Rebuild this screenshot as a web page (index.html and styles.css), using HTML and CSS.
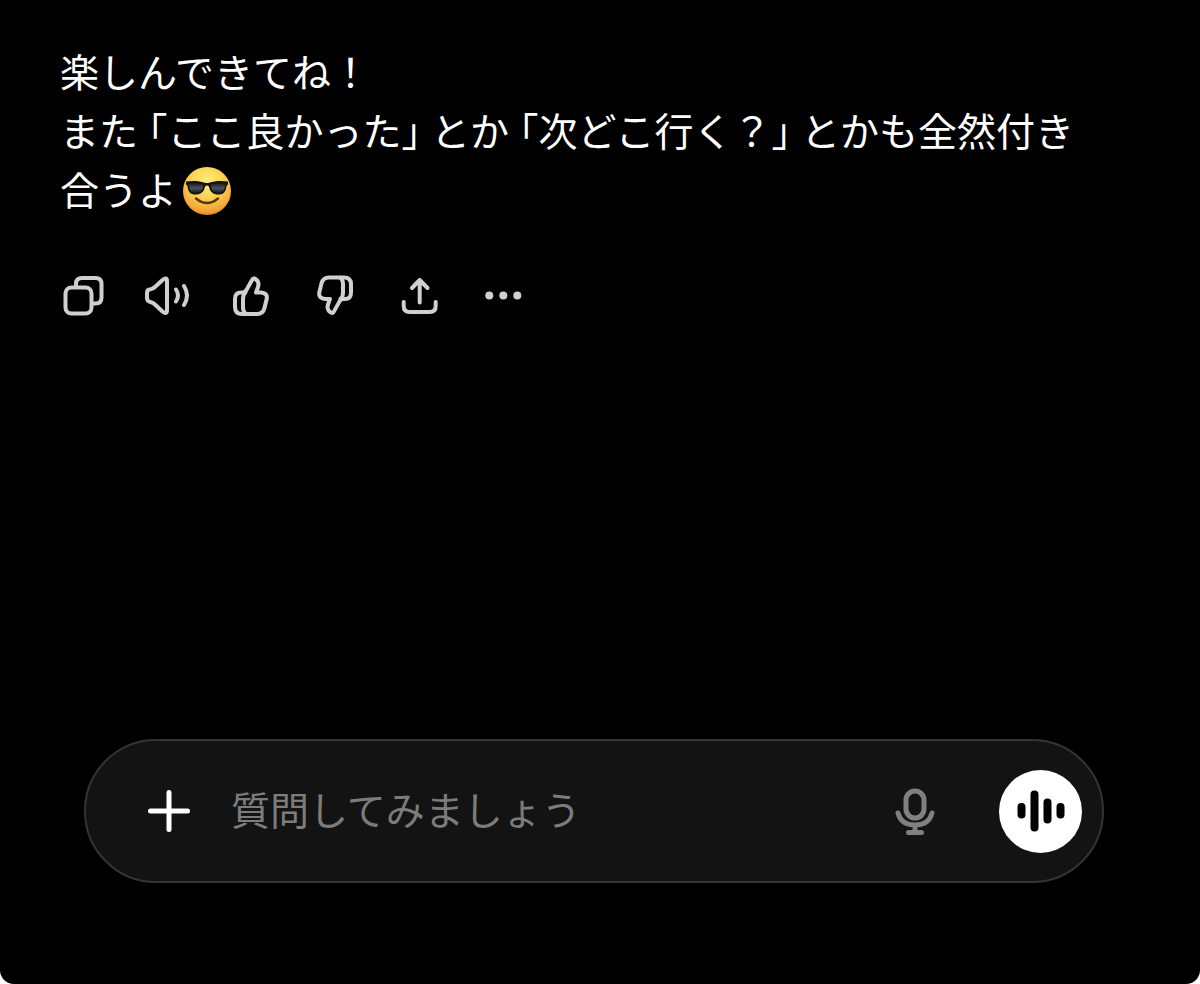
FILE: index.html
```html
<!DOCTYPE html>
<html lang="ja">
<head>
    <meta charset="UTF-8">
    <meta name="viewport" content="width=device-width, initial-scale=1.0">
    <title>チャット</title>
    <link rel="stylesheet" href="styles.css">
</head>
<body>
    <div class="container">
        <main class="message">
            <p class="message__text">楽しんできてね！<br>また<span class="quote">「ここ良かった」</span>とか<span class="quote">「次どこ行く？」</span>とかも全然付き合うよ<svg class="emoji" viewBox="0 0 50 50" role="img" aria-label="😎">
                <defs>
                    <radialGradient id="face" cx="0.5" cy="0.3" r="0.72">
                        <stop offset="0" stop-color="#ffee7c"/>
                        <stop offset="0.5" stop-color="#fbd052"/>
                        <stop offset="0.85" stop-color="#f2a638"/>
                        <stop offset="1" stop-color="#df8524"/>
                    </radialGradient>
                    <linearGradient id="lens" x1="0" y1="0" x2="0" y2="1">
                        <stop offset="0" stop-color="#18191c"/>
                        <stop offset="0.5" stop-color="#4a5366"/>
                        <stop offset="1" stop-color="#181a20"/>
                    </linearGradient>
                </defs>
                <circle cx="25" cy="25" r="24" fill="url(#face)"/>
                <path d="M4 15.500C10 14.500 18 14.800 22 16.500Q25 17.500 28 16.500C32 14.800 40 14.500 46 15.500V18.500L44.500 20C44 26 41.500 28.500 36.500 28.500C31 28.500 28 26 27 20.500Q25 18.500 23 20.500C22 26 19 28.500 13.500 28.500C8.500 28.500 6 26 5.500 20L4 18.500Z" fill="#15120f"/>
                <path d="M7 18C12 16.800 18 17 21 18.500C21 24 18.500 27 13.500 27C9 27 7 24 7 18ZM43 18C38 16.800 32 17 29 18.500C29 24 31.500 27 36.500 27C41 27 43 24 43 18Z" fill="url(#lens)"/>
                <path d="M14 32.500Q25 41.500 36 32.500" fill="none" stroke="#5c330c" stroke-width="2.400" stroke-linecap="round"/>
            </svg></p>
            <div class="actions">
                <button class="actions__item" type="button" aria-label="コピー">
                    <svg class="icon" viewBox="0 0 48 48">
                        <rect x="5.500" y="15.500" width="26" height="26" rx="6"/>
                        <path d="M16 15V12Q16 6 22 6H35.500Q41.500 6 41.500 12V25.500Q41.500 31.500 35.500 31.500H32"/>
                    </svg>
                </button>
                <button class="actions__item" type="button" aria-label="読み上げる">
                    <svg class="icon" viewBox="0 0 48 48">
                        <path d="M3 21Q3 17.300 6.500 17.200Q9 17 11.500 14.500L18.500 8Q23 4.500 23 9V38Q23 43 18.500 39.500L11.500 33Q9 30.500 6.500 30Q3 29.500 3 26Z"/>
                        <path d="M32 17.500Q36 23.500 32 29.500M40 14Q46 23.500 40 33"/>
                    </svg>
                </button>
                <button class="actions__item" type="button" aria-label="良い回答">
                    <svg class="icon" viewBox="0 0 48 48">
                        <path d="M13 20.500H15Q17.500 20 19 17L24 8Q25.500 5 28 7.500Q31.500 10 30 15L28 20.500H33Q39.500 21 38.800 26.500L36.500 36Q35 42 29 42H14Q7 42 7 35V27Q7 20.500 13 20.500Z"/>
                        <path d="M17.500 20.500Q15 22.500 15 27V35.500Q15 39.500 17.500 41.500"/>
                    </svg>
                </button>
                <button class="actions__item" type="button" aria-label="良くない回答">
                    <svg class="icon" viewBox="0 0 48 48">
                        <g transform="rotate(180 23 23.700)">
                            <path d="M13 20.500H15Q17.500 20 19 17L24 8Q25.500 5 28 7.500Q31.500 10 30 15L28 20.500H33Q39.500 21 38.800 26.500L36.500 36Q35 42 29 42H14Q7 42 7 35V27Q7 20.500 13 20.500Z"/>
                            <path d="M17.500 20.500Q15 22.500 15 27V35.500Q15 39.500 17.500 41.500"/>
                        </g>
                    </svg>
                </button>
                <button class="actions__item" type="button" aria-label="共有">
                    <svg class="icon" viewBox="0 0 48 48">
                        <path d="M23.700 30.500V8M16 16L23.700 8L31.500 16M7.700 30V34Q7.700 40 13.700 40H33.700Q39.700 40 39.700 34V30"/>
                    </svg>
                </button>
                <button class="actions__item" type="button" aria-label="その他">
                    <svg class="icon icon_solid" viewBox="0 0 48 48">
                        <circle cx="9.300" cy="23.400" r="4"/>
                        <circle cx="23.300" cy="23.400" r="4"/>
                        <circle cx="37.300" cy="23.400" r="4"/>
                    </svg>
                </button>
            </div>
        </main>
        <form class="composer">
            <button class="composer__button" type="button" aria-label="追加">
                <svg class="icon icon_plus" viewBox="0 0 48 48">
                    <path d="M24 5.500V42.500M5.500 24H42.500"/>
                </svg>
            </button>
            <input class="composer__input" type="text" placeholder="質問してみましょう" aria-label="質問してみましょう">
            <button class="composer__button" type="button" aria-label="音声入力">
                <svg class="icon icon_mic" viewBox="0 0 48 48">
                    <rect x="15" y="4" width="18" height="27" rx="9"/>
                    <path d="M7 26C9 34 15 38 24 38S39 34 41 26M24 38V45.500M17.500 45.500H30.500"/>
                </svg>
            </button>
            <button class="composer__voice" type="button" aria-label="音声モード">
                <svg class="icon icon_wave" viewBox="0 0 48 48">
                    <path d="M4.500 20V27.500M17.500 7.500V40.500M30.500 15.500V32.500M43.500 20V27.500"/>
                </svg>
            </button>
        </form>
    </div>
</body>
</html>
```
FILE: styles.css
```css
* {
    box-sizing: border-box;
}

html {
    background-color: #ffffff;
}

body {
    font-family: "Noto Sans CJK JP", sans-serif;
    font-weight: 400;
    color: #ffffff;
    margin: 0;
}

button {
    display: flex;
    align-items: center;
    justify-content: center;
    padding: 0;
    border: none;
    background: none;
    cursor: pointer;
}

.container {
    display: flex;
    flex-direction: column;
    justify-content: space-between;
    min-height: 100vh;
    padding: 41px 96px 101px 60px;
    border-radius: 0 0 14px 14px;
    background-color: #000000;
}

.message__text {
    margin: 0;
    font-size: 39px;
    line-height: 59px;
}

/* half-width brackets with a little air outside */
.quote {
    margin: 0 10px;
    font-feature-settings: "halt";
}

.emoji {
    width: 50px;
    height: 50px;
    margin-left: 5px;
    margin-bottom: 6px;
    vertical-align: middle;
}

.actions {
    display: flex;
    gap: 36px;
    margin-top: 50px;
}

.icon {
    display: block;
    width: 48px;
    height: 48px;
    fill: none;
    stroke: #d0d0d0;
    stroke-width: 4px;
    stroke-linecap: round;
    stroke-linejoin: round;
}

.icon_solid {
    fill: #d0d0d0;
    stroke: none;
}

.icon_plus {
    stroke: #ffffff;
    stroke-width: 5px;
}

.icon_mic {
    stroke: #808080;
    stroke-width: 5px;
}

.icon_wave {
    stroke: #000000;
    stroke-width: 8px;
}

.composer {
    display: flex;
    align-items: center;
    height: 144px;
    margin-left: 24px;
    padding: 0 20px 0 59px;
    border: 2px solid #343434;
    border-radius: 72px;
    background-color: #131313;
}

.composer__button {
    flex: none;
}

.composer__input {
    flex: 1;
    min-width: 0;
    margin: 0 38px;
    padding: 0 0 6px;
    border: none;
    outline: none;
    background: none;
    color: #ffffff;
    font-family: inherit;
    font-size: 39px;
}

.composer__input::placeholder {
    color: #7c7c7c;
}

.composer__voice {
    flex: none;
    width: 83px;
    height: 83px;
    margin-left: 60px;
    border-radius: 50%;
    background-color: #ffffff;
}
```
